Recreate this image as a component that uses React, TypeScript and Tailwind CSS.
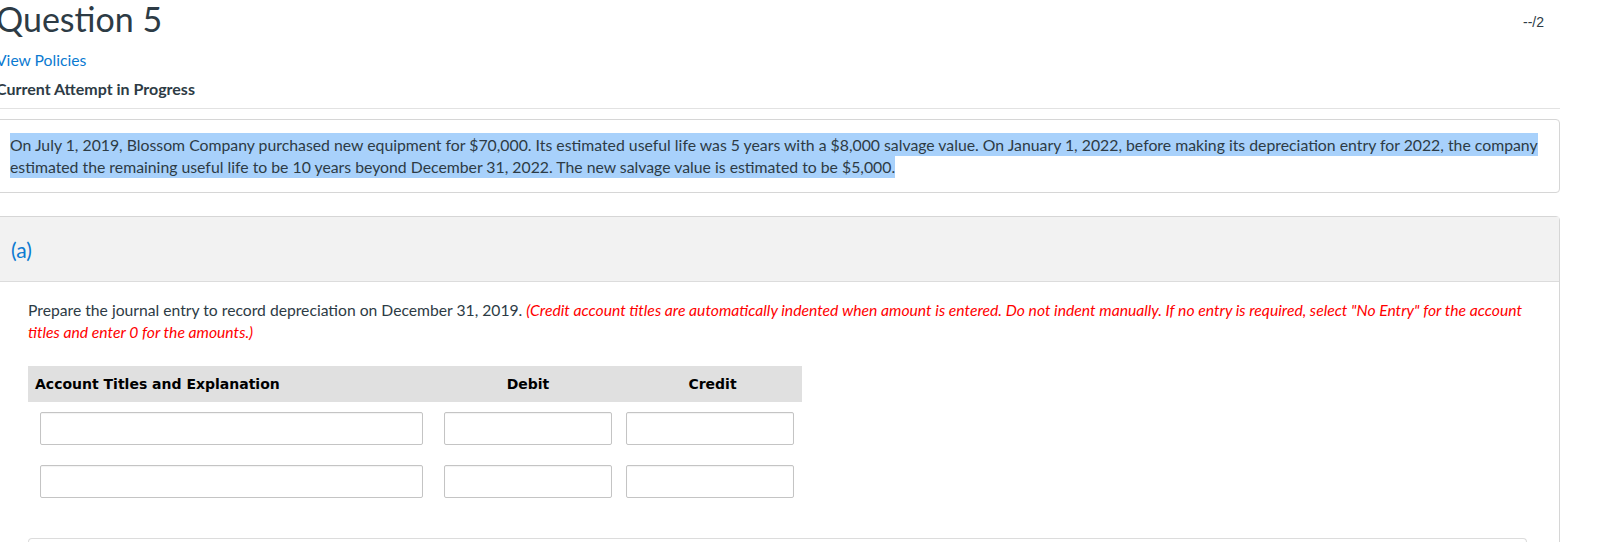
import React from "react";

export default function App() {
  const lato = { fontFamily: "Lato, 'Noto Sans', sans-serif" };
  const inputCls =
    "h-[33px] rounded-[2px] border border-[#c4c4c4] bg-white shadow-[inset_0_1px_1px_rgba(0,0,0,0.05)] outline-none";
  return (
    <div className="w-[1597px] h-[542px] overflow-hidden bg-white text-[#2d3b45]" style={lato}>
      <div className="-ml-[4px] w-[1564px]">
        {/* Header */}
        <div className="flex items-start justify-between">
          <h1 className="-mt-[2px] text-[34px] leading-[41px] font-normal text-[#2d3b45]">Question 5</h1>
          <div
            className="mt-[12px] pr-[16px] text-[14px] leading-[20px] text-[#2d3b45]"
            style={{ fontFamily: "'Liberation Sans', Arial, sans-serif" }}
          >
            --/2
          </div>
        </div>
        <div className="mt-[10px] text-[15.7px] leading-[22px] text-[#0b7ad1]">View Policies</div>
        <div className="mt-[7px] pb-[8px] text-[16px] leading-[22px] font-bold text-[#2d3b45] border-b border-[#e2e2e2]">
          Current Attempt in Progress
        </div>

        {/* Problem statement card */}
        <div className="mt-[10px] border border-[#d6d6d6] rounded-[4px] pl-[13px] pr-[14px] pt-[14px] pb-[14px] text-[15.8px] leading-[22px]">
          <span className="bg-[#a8d1fb] py-[2px] box-decoration-clone">
            On July 1, 2019, Blossom Company purchased new equipment for $70,000. Its estimated useful life was 5 years with a $8,000 salvage value. On January 1, 2022, before making its depreciation entry for 2022, the company estimated the remaining useful life to be 10 years beyond December 31, 2022. The new salvage value is estimated to be $5,000.
          </span>
        </div>

        {/* Part (a) */}
        <div className="mt-[23px] border border-[#d6d6d6] rounded-t-[4px]">
          <div className="h-[65px] bg-[#f2f2f2] border-b border-[#dcdcdc] flex items-center pl-[14px]">
            <span className="text-[21px] text-[#0b7ad1] leading-none">(a)</span>
          </div>
          <div className="pl-[31px] pr-[20px] pt-[17px]">
            <p className="text-[15.7px] leading-[22px] text-[#2d3b45]">
              Prepare the journal entry to record depreciation on December 31, 2019.{" "}
              <em className="text-[#ff0000]">
                (Credit account titles are automatically indented when amount is entered. Do not indent manually. If no entry is required, select "No Entry" for the account titles and enter 0 for the amounts.)
              </em>
            </p>

            {/* Table */}
            <div className="mt-[23px] w-[774px]">
              <div
                className="flex h-[36px] items-center bg-[#e0e0e0] text-[14px] font-bold text-black"
                style={{ fontFamily: "'DejaVu Sans', Verdana, sans-serif" }}
              >
                <div className="w-[405px] pl-[7px]">Account Titles and Explanation</div>
                <div className="w-[190px] text-center">Debit</div>
                <div className="w-[179px] text-center">Credit</div>
              </div>
              <div className="mt-[10px] flex pl-[12px]">
                <input className={`${inputCls} w-[383px]`} />
                <input className={`${inputCls} ml-[21px] w-[168px]`} />
                <input className={`${inputCls} ml-[14px] w-[168px]`} />
              </div>
              <div className="mt-[20px] flex pl-[12px]">
                <input className={`${inputCls} w-[383px]`} />
                <input className={`${inputCls} ml-[21px] w-[168px]`} />
                <input className={`${inputCls} ml-[14px] w-[168px]`} />
              </div>
            </div>

            <div className="mt-[40px] mr-[12px] h-[40px] border-t border-x border-[#dcdcdc] rounded-t-[4px]" />
          </div>
        </div>
      </div>
    </div>
  );
}
